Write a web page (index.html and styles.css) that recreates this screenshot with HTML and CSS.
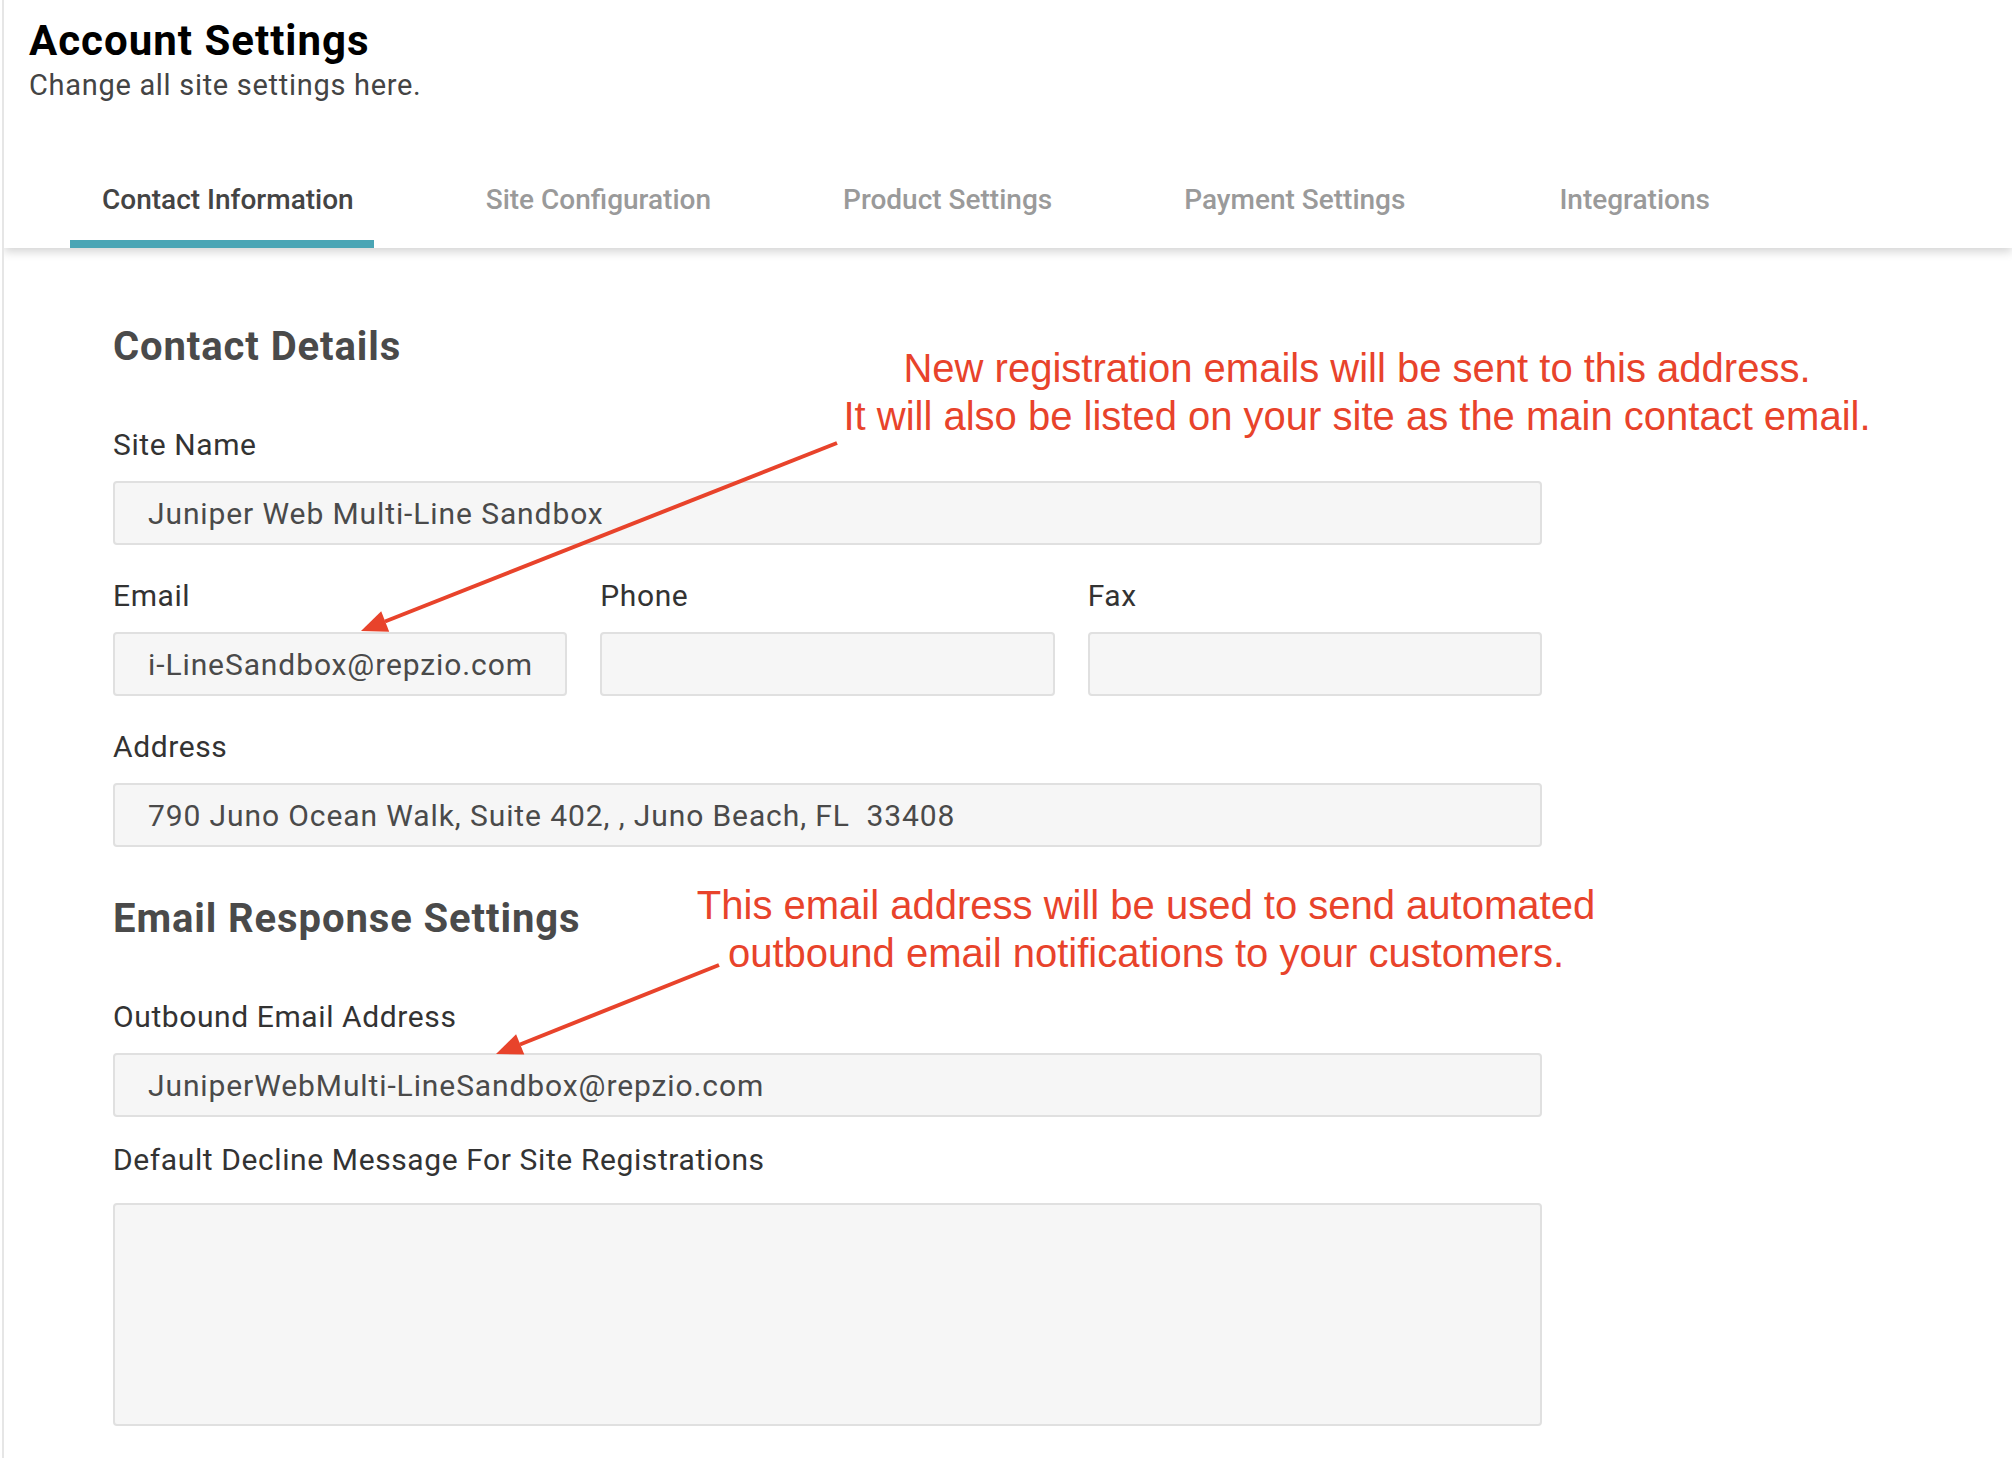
FILE: index.html
```html
<!DOCTYPE html>
<html lang="en">
<head>
    <meta charset="UTF-8">
    <meta name="viewport" content="width=device-width, initial-scale=1.0">
    <title>Account Settings</title>
    <link rel="stylesheet" href="styles.css">
</head>
<body>
    <div class="page">
        <header class="top">
            <h1>Account Settings</h1>
            <p class="subtitle">Change all site settings here.</p>
            <nav class="tabs">
                <a class="tab active" href="#">Contact Information</a>
                <a class="tab" href="#">Site Configuration</a>
                <a class="tab" href="#">Product Settings</a>
                <a class="tab" href="#">Payment Settings</a>
                <a class="tab" href="#">Integrations</a>
            </nav>
        </header>

        <main class="content">
            <form class="settings-form">
                <h2>Contact Details</h2>
                <div class="field">
                    <label for="siteName">Site Name</label>
                    <input type="text" id="siteName" value="Juniper Web Multi-Line Sandbox">
                </div>
                <div class="field-row">
                    <div class="field">
                        <label for="email">Email</label>
                        <input type="text" id="email" value="i-LineSandbox@repzio.com">
                    </div>
                    <div class="field">
                        <label for="phone">Phone</label>
                        <input type="text" id="phone">
                    </div>
                    <div class="field">
                        <label for="fax">Fax</label>
                        <input type="text" id="fax">
                    </div>
                </div>
                <div class="field">
                    <label for="address">Address</label>
                    <input type="text" id="address" value="790 Juno Ocean Walk, Suite 402, , Juno Beach, FL  33408">
                </div>

                <h2 class="section-title">Email Response Settings</h2>
                <div class="field">
                    <label for="outbound">Outbound Email Address</label>
                    <input type="text" id="outbound" value="JuniperWebMulti-LineSandbox@repzio.com">
                </div>
                <div class="field field-message">
                    <label for="decline">Default Decline Message For Site Registrations</label>
                    <textarea id="decline"></textarea>
                </div>
            </form>
        </main>

        <!-- annotations -->
        <div class="note note-contact">New registration emails will be sent to this address.<br>It will also be listed on your site as the main contact email.</div>
        <div class="note note-outbound">This email address will be used to send automated<br>outbound email notifications to your customers.</div>
        <svg class="arrows" width="2008" height="1458" viewBox="4 0 2008 1458">
            <line x1="837" y1="443" x2="385" y2="621.5" />
            <polygon points="361,631 389.2,631.7 381.2,611.3" />
            <line x1="719" y1="965" x2="520" y2="1044.5" />
            <polygon points="496,1054 524.3,1054.6 516.1,1034.2" />
        </svg>
    </div>
</body>
</html>
```

FILE: styles.css
```css
body {
    margin: 0;
    padding: 0;
    font-family: Roboto, "Liberation Sans", sans-serif;
    background-color: white;
}
.page {
    position: relative;
    margin-left: 2px;
    border-left: 2px solid #e6e6e6;
    min-height: 100vh;
    overflow: hidden;
}
.top {
    position: relative;
    padding: 16px 0 0 25px;
    background-color: white;
    box-shadow: 0 4px 9px rgba(0, 0, 0, 0.17);
}
h1 {
    margin: 0;
    font-size: 42px;
    line-height: 50px;
    font-weight: 700;
    letter-spacing: 1px;
    color: #000;
}
.subtitle {
    margin: 2px 0 0;
    font-size: 29px;
    line-height: 34px;
    letter-spacing: 0.7px;
    color: #444;
}
.tabs {
    display: flex;
    gap: 80px;
    margin-top: 58px;
    padding-left: 41px;
}
.tab {
    padding: 24px 20px 24px 32px;
    border-bottom: 8px solid transparent;
    font-size: 28px;
    line-height: 32px;
    font-weight: 500;
    color: #9a9a9a;
    text-decoration: none;
}
.tab:last-child {
    margin-left: 22px;
}
.tab.active {
    color: #444;
    border-bottom-color: #4aa5b5;
}
.content {
    padding: 75px 0 40px 109px;
}
.settings-form {
    width: 1429px;
}
h2 {
    margin: 0 0 56px;
    font-size: 40px;
    line-height: 48px;
    font-weight: 700;
    letter-spacing: 0.9px;
    color: #4a4a4a;
}
.section-title {
    margin-top: 48px;
}
.field {
    display: flex;
    flex-direction: column;
}
.field + .field, .field-row + .field, .field + .field-row {
    margin-top: 33px;
}
.field-row {
    display: grid;
    grid-template-columns: repeat(3, 1fr);
    gap: 33px;
}
.field-row .field + .field {
    margin-top: 0;
}
label {
    display: block;
    margin-bottom: 18px;
    font-size: 30px;
    line-height: 36px;
    letter-spacing: 0.6px;
    color: #333;
}
input[type="text"], textarea {
    box-sizing: border-box;
    width: 100%;
    height: 64px;
    padding: 0 33px;
    border: 2px solid #e0e0e0;
    border-radius: 4px;
    background-color: #f6f6f6;
    font-family: Roboto, "Liberation Sans", sans-serif;
    font-size: 30px;
    letter-spacing: 0.9px;
    color: #4a4a4a;
    outline: none;
}
.field-message {
    margin-top: 25px !important;
}
.field-message label {
    margin-bottom: 25px;
}
textarea {
    height: 223px;
    resize: none;
}
.note {
    position: absolute;
    font-family: "Liberation Sans", Arial, sans-serif;
    font-size: 40px;
    line-height: 48px;
    color: #e8432b;
    text-align: center;
    white-space: nowrap;
}
.note-contact {
    left: 803px;
    top: 344px;
    width: 1100px;
}
.note-outbound {
    left: 642px;
    top: 881px;
    width: 1000px;
}
.arrows {
    position: absolute;
    top: 0;
    left: 0;
    pointer-events: none;
}
.arrows line {
    stroke: #e8432b;
    stroke-width: 4;
}
.arrows polygon {
    fill: #e8432b;
}
```
